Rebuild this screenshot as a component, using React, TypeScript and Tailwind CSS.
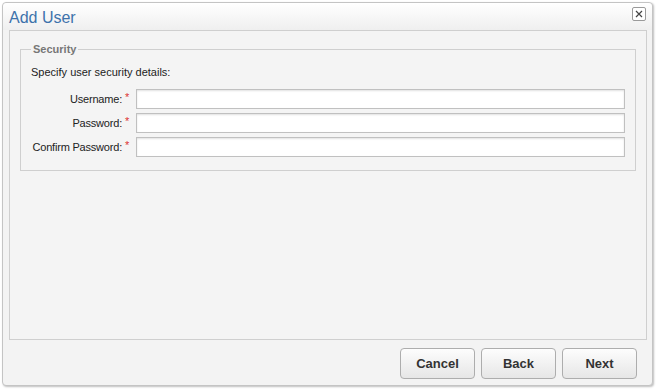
import React from 'react';

type Field = { label: string; type: string };

const fields: Field[] = [
  { label: 'Username:', type: 'text' },
  { label: 'Password:', type: 'password' },
  { label: 'Confirm Password:', type: 'password' },
];

export default function App() {
  return (
    <div className="w-[657px] h-[391px] bg-white pt-[2px] pl-[2px] font-['Liberation_Sans',Arial,sans-serif]">
      <div className="w-[651px] h-[384px] flex flex-col rounded-[4px] border border-[#c4c4c4] bg-[#f3f3f3] shadow-[1px_1px_2px_rgba(0,0,0,0.25)]">
        {/* title bar */}
        <div className="h-[27px] flex items-center justify-between pl-[6px] pr-[6px] rounded-t-[4px] bg-gradient-to-b from-white to-[#efefef]">
          <span className="text-[16px] text-[#3d72ab] leading-none mt-[2px]">Add User</span>
          <button className="w-[14px] h-[14px] mt-[-6px] flex items-center justify-center rounded-[2px] border border-[#9a9a9a] bg-white">
            <svg width="10" height="10" viewBox="0 0 10 10">
              <path d="M2 2 L8 8 M8 2 L2 8" stroke="#444" strokeWidth="1.2" />
            </svg>
          </button>
        </div>

        {/* body */}
        <div className="ml-[6px] mr-[5px] h-[310px] border border-[#cfcfcf] bg-[#f4f4f4] px-[10px] pt-[10px]">
          <fieldset className="border border-[#cfcfcf] px-[10px] pb-[13px]">
            <legend className="px-[2px] text-[11px] font-bold text-[#777]">Security</legend>
            <div className="text-[11px] text-[#222] mt-[6px] mb-[9px]">Specify user security details:</div>
            <div className="flex flex-col gap-[4px]">
              {fields.map((f) => (
                <div key={f.label} className="flex items-center h-[20px]">
                  <label className="w-[91px] text-right text-[11px] tracking-[-0.2px] text-[#222] whitespace-nowrap">{f.label}</label>
                  <span className="w-[14px] pl-[3px] self-start pt-[3px] text-[11px] text-[#d33] leading-none">*</span>
                  <input
                    type={f.type}
                    className="flex-1 h-[20px] border border-[#c0c0c0] bg-white shadow-[inset_0_1px_2px_rgba(0,0,0,0.12)] outline-none"
                  />
                </div>
              ))}
            </div>
          </fieldset>
        </div>

        {/* footer */}
        <div className="flex justify-end gap-[6px] pr-[15px] pt-[8px]">
          {['Cancel', 'Back', 'Next'].map((b) => (
            <button
              key={b}
              className="w-[75px] h-[31px] rounded-[4px] border border-[#adadad] bg-gradient-to-b from-[#fdfdfd] to-[#e6e6e6] text-[13px] font-bold text-[#333]"
            >
              {b}
            </button>
          ))}
        </div>
      </div>
    </div>
  );
}
